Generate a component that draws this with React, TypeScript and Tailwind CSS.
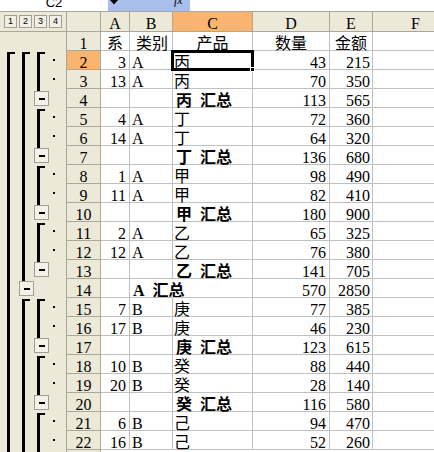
import React from 'react'

type Kind = 'head' | 'item' | 'sub' | 'total'
type Seg = 'start' | 'line' | 'end' | 'dot' | 'none'

type Row = {
  n: number
  kind: Kind
  a?: string
  b?: string
  c?: string
  d?: string
  e?: string
}

const rows: Row[] = [
  { n: 1, kind: 'head', a: '系', b: '类别', c: '产品', d: '数量', e: '金额' },
  { n: 2, kind: 'item', a: '3', b: 'A', c: '丙', d: '43', e: '215' },
  { n: 3, kind: 'item', a: '13', b: 'A', c: '丙', d: '70', e: '350' },
  { n: 4, kind: 'sub', c: '丙\u2002汇总', d: '113', e: '565' },
  { n: 5, kind: 'item', a: '4', b: 'A', c: '丁', d: '72', e: '360' },
  { n: 6, kind: 'item', a: '14', b: 'A', c: '丁', d: '64', e: '320' },
  { n: 7, kind: 'sub', c: '丁\u2002汇总', d: '136', e: '680' },
  { n: 8, kind: 'item', a: '1', b: 'A', c: '甲', d: '98', e: '490' },
  { n: 9, kind: 'item', a: '11', b: 'A', c: '甲', d: '82', e: '410' },
  { n: 10, kind: 'sub', c: '甲\u2002汇总', d: '180', e: '900' },
  { n: 11, kind: 'item', a: '2', b: 'A', c: '乙', d: '65', e: '325' },
  { n: 12, kind: 'item', a: '12', b: 'A', c: '乙', d: '76', e: '380' },
  { n: 13, kind: 'sub', c: '乙\u2002汇总', d: '141', e: '705' },
  { n: 14, kind: 'total', b: 'A\u2002汇总', d: '570', e: '2850' },
  { n: 15, kind: 'item', a: '7', b: 'B', c: '庚', d: '77', e: '385' },
  { n: 16, kind: 'item', a: '17', b: 'B', c: '庚', d: '46', e: '230' },
  { n: 17, kind: 'sub', c: '庚\u2002汇总', d: '123', e: '615' },
  { n: 18, kind: 'item', a: '10', b: 'B', c: '癸', d: '88', e: '440' },
  { n: 19, kind: 'item', a: '20', b: 'B', c: '癸', d: '28', e: '140' },
  { n: 20, kind: 'sub', c: '癸\u2002汇总', d: '116', e: '580' },
  { n: 21, kind: 'item', a: '6', b: 'B', c: '己', d: '94', e: '470' },
  { n: 22, kind: 'item', a: '16', b: 'B', c: '己', d: '52', e: '260' },
]

const segsFor = (i: number): Seg[] => {
  const r = rows[i]
  if (r.kind === 'head') return ['none', 'none', 'none', 'none']
  const prev = rows[i - 1].kind
  const l1: Seg = i === 1 ? 'start' : 'line'
  const l2: Seg =
    r.kind === 'total' ? 'end' : prev === 'head' || prev === 'total' ? 'start' : 'line'
  let l3: Seg = 'none'
  if (r.kind === 'item') l3 = prev === 'item' ? 'line' : 'start'
  if (r.kind === 'sub') l3 = 'end'
  const l4: Seg = r.kind === 'item' ? 'dot' : 'none'
  return [l1, l2, l3, l4]
}

const MinusBox = () => (
  <div className="w-[15px] h-[15px] border border-[#a19f93] bg-[#f3f1e8] flex items-center justify-center">
    <div className="w-[6px] h-[2px] bg-black" />
  </div>
)

const Slot = ({ s }: { s: Seg }) => {
  if (s === 'line')
    return (
      <div className="w-[15px] h-full">
        <div className="ml-[3px] w-[3px] h-full bg-black" />
      </div>
    )
  if (s === 'start')
    return (
      <div className="w-[15px] h-full flex flex-col pt-[1px]">
        <div className="ml-[3px] w-[8px] h-[2px] bg-black" />
        <div className="ml-[3px] w-[3px] flex-1 bg-black" />
      </div>
    )
  if (s === 'end')
    return (
      <div className="w-[15px] h-full flex flex-col">
        <div className="ml-[3px] w-[3px] h-[2px] bg-black" />
        <MinusBox />
      </div>
    )
  if (s === 'dot')
    return (
      <div className="w-[15px] h-full pt-[8px]">
        <div className="ml-[4px] w-[2px] h-[2px] bg-black" />
      </div>
    )
  return <div className="w-[15px] h-full" />
}

const cols = [
  { key: 'A', w: 'w-[29px]' },
  { key: 'B', w: 'w-[43px]' },
  { key: 'C', w: 'w-[80px]' },
  { key: 'D', w: 'w-[77px]' },
  { key: 'E', w: 'w-[43px]' },
  { key: 'F', w: 'w-[86px]' },
]

const cell = 'h-full flex items-end leading-[12px] whitespace-nowrap border-b border-[#c0c0c0] shrink-0'

const App = () => {
  return (
    <div className="w-[434px] h-[452px] overflow-hidden bg-white text-black font-['Liberation_Serif','Noto_Sans_CJK_SC',serif] text-[16px]">
      {/* formula bar, cut at the top */}
      <div className="h-[12px] flex border-b border-[#a7a6a0] overflow-hidden">
        <div className="w-[108px] flex justify-center">
          <span className="-mt-[4px] text-[13px] leading-[13px] font-['Liberation_Sans',sans-serif]">C2</span>
        </div>
        <div className="w-[82px] bg-[#a7bfea] flex items-start">
          <svg width="8" height="5" viewBox="0 0 8 5" className="ml-[2px]">
            <polygon points="0,0 8,0 4,4.5" fill="#000" />
          </svg>
          <span className="ml-[56px] -mt-[6px] text-[12px] leading-[12px] italic font-['Liberation_Serif',serif]">fx</span>
        </div>
        <div className="flex-1" />
      </div>

      {/* column headers */}
      <div className="flex h-[20px]">
        <div className="w-[67px] shrink-0 bg-[#ece9d8] border-r border-b border-[#aca899] flex gap-[2px] pl-[4px] pt-[3px]">
          {['1', '2', '3', '4'].map((l) => (
            <div
              key={l}
              className="w-[13px] h-[13px] border border-[#a19f93] bg-[#f1efe6] flex items-center justify-center text-[9px] leading-[9px] font-['Liberation_Sans',sans-serif]"
            >
              {l}
            </div>
          ))}
        </div>
        <div className="w-[34px] shrink-0 bg-[#ece9d8] border-r border-b border-[#aca899]" />
        {cols.map((c) => (
          <div
            key={c.key}
            className={`${c.w} shrink-0 h-full flex items-end justify-center leading-[12px] pb-[1px] border-r border-b border-[#aca899] ${
              c.key === 'C' ? 'bg-[#f9b56f]' : 'bg-[#ece9d8]'
            }`}
          >
            {c.key}
          </div>
        ))}
      </div>

      {rows.map((r, i) => {
        const segs = segsFor(i)
        const head = r.kind === 'head'
        const bold = r.kind === 'sub' || r.kind === 'total'
        return (
          <div key={r.n} className="flex h-[19px]">
            <div className="w-[67px] shrink-0 h-full bg-[#ece9d8] border-r border-[#aca899] flex pl-[4px]">
              {segs.map((s, k) => (
                <Slot key={k} s={s} />
              ))}
            </div>
            <div
              className={`w-[34px] shrink-0 h-full flex items-end justify-center leading-[12px] border-r border-b border-[#aca899] ${
                r.n === 2 ? 'bg-[#f9b56f]' : 'bg-[#ece9d8]'
              }`}
            >
              {r.n}
            </div>
            <div className={`${cell} w-[29px] border-r ${head ? 'justify-center' : 'justify-end pr-[3px]'}`}>{r.a}</div>
            <div
              className={`${cell} w-[43px] ${r.kind === 'total' ? 'font-bold pl-[3px]' : 'border-r pl-[2px]'} ${
                head ? 'justify-center pl-0' : ''
              }`}
            >
              {r.b}
            </div>
            <div
              className={`${cell} w-[80px] border-r relative ${head ? 'justify-center' : bold ? 'font-bold pl-[3px]' : 'pl-[1px]'}`}
            >
              {r.c}
              {r.n === 2 && (
                <div className="absolute z-10 -left-[2px] -top-[1px] w-[83px] h-[21px] border-[3px] border-black">
                  <div className="absolute -right-[4px] -bottom-[4px] w-[5px] h-[5px] bg-black border border-white" />
                </div>
              )}
            </div>
            <div className={`${cell} w-[77px] border-r ${head ? 'justify-center' : 'justify-end pr-[3px]'}`}>{r.d}</div>
            <div className={`${cell} w-[43px] border-r ${head ? 'justify-center' : 'justify-end pr-[2px]'}`}>{r.e}</div>
            <div className={`${cell} w-[86px] border-r`} />
          </div>
        )
      })}

      {/* row 23, only its top edge shows */}
      <div className="flex h-[19px]">
        <div className="w-[67px] shrink-0 h-full bg-[#ece9d8] border-r border-[#aca899] flex pl-[4px]">
          <Slot s="line" />
          <Slot s="line" />
          <Slot s="end" />
          <Slot s="none" />
        </div>
        <div className="w-[34px] shrink-0 h-full bg-[#ece9d8] border-r border-[#aca899]" />
        <div className="flex-1 h-full" />
      </div>
    </div>
  )
}

export default App
